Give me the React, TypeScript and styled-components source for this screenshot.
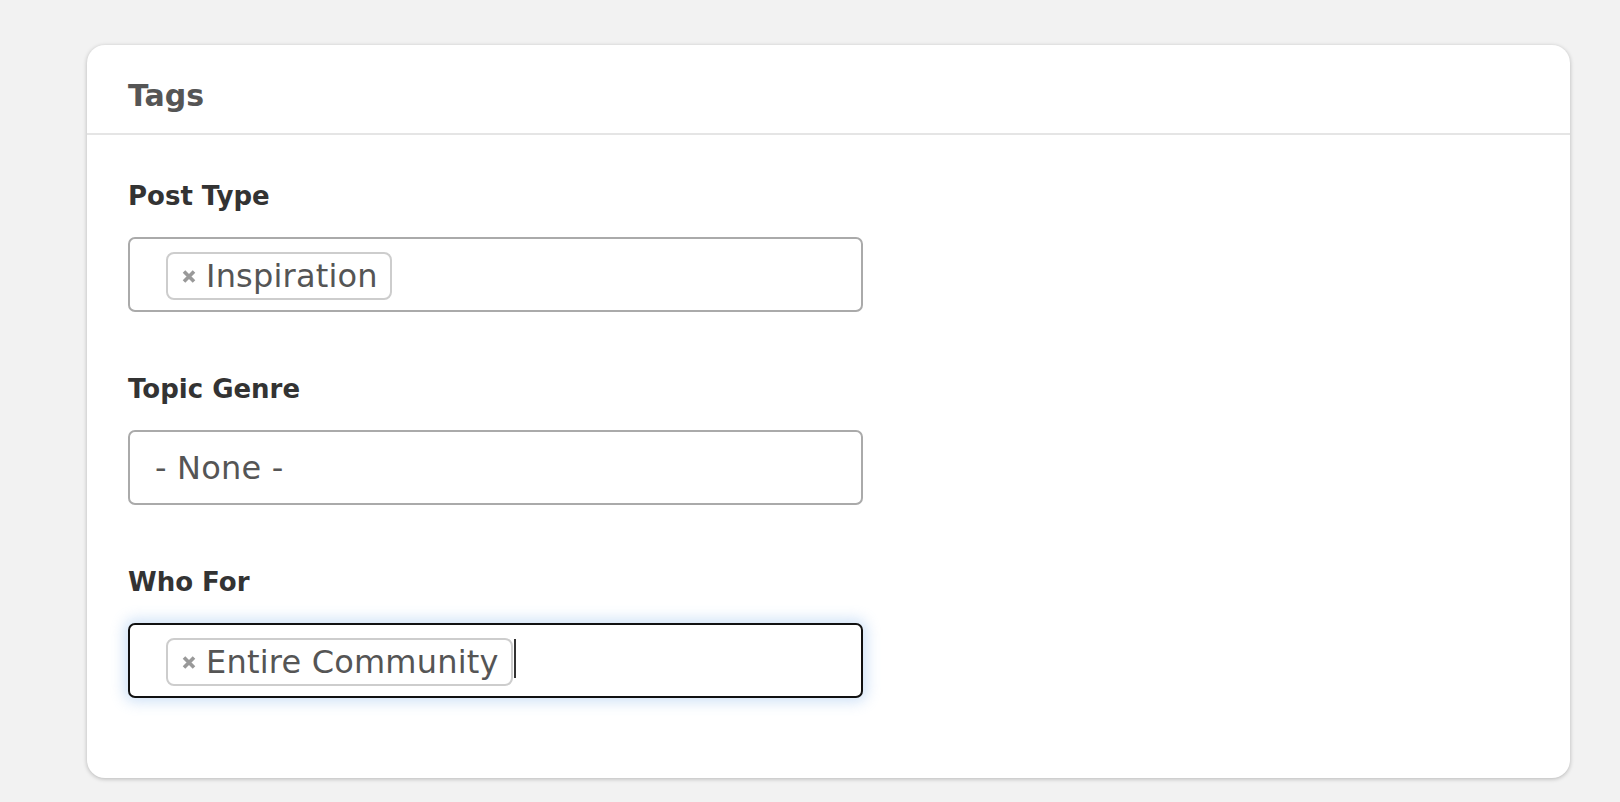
import React from "react";
import styled, { createGlobalStyle } from "styled-components";

const GlobalStyle = createGlobalStyle`
  html, body { margin: 0; padding: 0; }
  body {
    background: #f2f2f2;
    font-family: "DejaVu Sans", "Noto Sans", sans-serif;
  }
`;

const Page = styled.div`
  padding: 45px 50px 24px 87px;
  min-height: 802px;
  box-sizing: border-box;
`;

const Card = styled.section`
  width: 1483px;
  background: #fff;
  border-radius: 18px;
  box-shadow: 0 1px 4px rgba(0, 0, 0, 0.25);
  overflow: hidden;
`;

const CardHeader = styled.header`
  height: 90px;
  box-sizing: border-box;
  padding: 33px 41px 0;
  border-bottom: 2px solid #e5e5e5;
`;

const CardTitle = styled.h2`
  margin: 0;
  font-size: 30px;
  line-height: 36px;
  font-weight: 700;
  color: #555;
`;

const CardBody = styled.div`
  display: flex;
  flex-direction: column;
  gap: 61px;
  padding: 45px 41px 80px;
`;

const Field = styled.div`
  display: flex;
  flex-direction: column;
  gap: 25px;
`;

const Label = styled.label`
  font-size: 26px;
  line-height: 32px;
  font-weight: 700;
  color: #333;
`;

const SelectBox = styled.div<{ $focused?: boolean; $padLeft: number }>`
  width: 735px;
  height: 75px;
  box-sizing: border-box;
  display: flex;
  align-items: center;
  padding-left: ${(p) => p.$padLeft}px;
  border: 2px solid ${(p) => (p.$focused ? "#111" : "#aaa")};
  border-radius: 7px;
  background: #fff;
  box-shadow: ${(p) =>
    p.$focused ? "0 0 14px 4px rgba(110, 165, 230, 0.32)" : "none"};
`;

const Placeholder = styled.span`
  font-size: 32px;
  letter-spacing: 0.2px;
  color: #555;
`;

const Tag = styled.span`
  display: inline-flex;
  align-items: center;
  height: 48px;
  box-sizing: border-box;
  padding: 0 12px 0 14px;
  border: 2px solid #cdcdcd;
  border-radius: 8px;
  background: #fff;
  gap: 10px;
  margin-top: 2px;
`;

const TagText = styled.span`
  font-size: 32px;
  letter-spacing: 0.2px;
  color: #555;
  line-height: 1;
`;

const RemoveIcon = styled.svg`
  width: 14px;
  height: 13px;
  flex: none;
  margin-top: 1px;
`;

const Caret = styled.span`
  width: 2px;
  height: 39px;
  background: #333;
  margin-left: 1px;
  margin-top: -4px;
`;

function Remove() {
  return (
    <RemoveIcon viewBox="0 0 14 13" aria-hidden="true">
      <path
        d="M2 1.5 L12 11.5 M12 1.5 L2 11.5"
        stroke="#999"
        strokeWidth="3.6"
        strokeLinecap="butt"
      />
    </RemoveIcon>
  );
}

type FieldData = {
  label: string;
  tag?: string;
  placeholder?: string;
  focused?: boolean;
};

const fields: FieldData[] = [
  { label: "Post Type", tag: "Inspiration" },
  { label: "Topic Genre", placeholder: "- None -" },
  { label: "Who For", tag: "Entire Community", focused: true },
];

export default function App() {
  return (
    <>
      <GlobalStyle />
      <Page>
        <Card>
          <CardHeader>
            <CardTitle>Tags</CardTitle>
          </CardHeader>
          <CardBody>
            {fields.map((f) => (
              <Field key={f.label}>
                <Label>{f.label}</Label>
                <SelectBox $focused={f.focused} $padLeft={f.tag ? 36 : 25}>
                  {f.tag ? (
                    <Tag>
                      <Remove />
                      <TagText>{f.tag}</TagText>
                    </Tag>
                  ) : (
                    <Placeholder>{f.placeholder}</Placeholder>
                  )}
                  {f.focused && <Caret />}
                </SelectBox>
              </Field>
            ))}
          </CardBody>
        </Card>
      </Page>
    </>
  );
}
